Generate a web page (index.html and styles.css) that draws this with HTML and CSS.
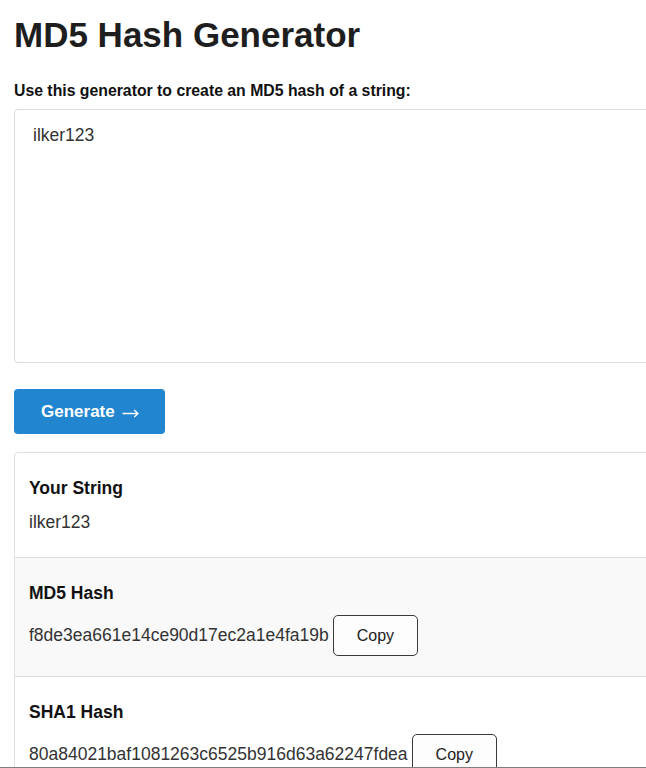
FILE: index.html
```html
<!DOCTYPE html>
<html lang="en">
<head>
<meta charset="utf-8">
<title>MD5 Hash Generator</title>
<link rel="stylesheet" href="styles.css">
</head>
<body>
<main class="page">
  <h1 class="title">MD5 Hash Generator</h1>
  <form class="form">
    <label class="label" for="input">Use this generator to create an MD5 hash of a string:</label>
    <textarea class="input" id="input">ilker123</textarea>
    <button type="button" class="generate">Generate <svg class="arrow" width="17" height="10" viewBox="0 0 17 10" aria-hidden="true"><path d="M0.5 5.5H16M12.2 2L16 5.5L12.2 9" fill="none" stroke="#ffffff" stroke-width="1.3"/></svg></button>
  </form>
  <section class="results">
    <div class="result">
      <h3 class="result-title">Your String</h3>
      <div class="result-row plain">ilker123</div>
    </div>
    <div class="result alt">
      <h3 class="result-title tight">MD5 Hash</h3>
      <div class="result-row"><span class="hash">f8de3ea661e14ce90d17ec2a1e4fa19b</span><button type="button" class="copy">Copy</button></div>
    </div>
    <div class="result">
      <h3 class="result-title tight">SHA1 Hash</h3>
      <div class="result-row"><span class="hash">80a84021baf1081263c6525b916d63a62247fdea</span><button type="button" class="copy">Copy</button></div>
    </div>
  </section>
</main>
<div class="window-edge"></div>
</body>
</html>
```

FILE: styles.css
```css
html {
  overflow: hidden;
}
body {
  margin: 0;
  padding: 0;
  background: #ffffff;
  font-family: "Liberation Sans", Arial, sans-serif;
  color: #222222;
}
.page {
  width: 720px;
  padding: 14.5px 0 0 14px;
}
.title {
  margin: 0;
  font-size: 35px;
  font-weight: 700;
  line-height: normal;
  color: #1e1e1e;
}
.form {
  display: flex;
  flex-direction: column;
  align-items: flex-start;
  margin-top: 27.5px;
}
.label {
  font-size: 15.8px;
  font-weight: 700;
  color: #111111;
  line-height: normal;
}
.input {
  box-sizing: border-box;
  width: 100%;
  height: 254px;
  margin-top: 9px;
  padding: 15px 18px;
  border: 1px solid #dcdcdc;
  border-radius: 4px;
  font-family: "Liberation Sans", Arial, sans-serif;
  font-size: 17.5px;
  line-height: normal;
  color: #333333;
  resize: none;
  outline: none;
}
.generate {
  display: flex;
  align-items: center;
  gap: 7px;
  margin-top: 26px;
  height: 45px;
  padding: 0 26px 0 27px;
  border: none;
  border-radius: 4px;
  background: #2185d0;
  color: #ffffff;
  font-family: "Liberation Sans", Arial, sans-serif;
  font-size: 17px;
  font-weight: 700;
}
.arrow {
  display: block;
  margin-top: 2px;
}
.results {
  margin-top: 18px;
  border: 1px solid #e0e0e0;
  border-radius: 4px;
}
.result {
  padding: 25px 14px 20px;
}
.result + .result {
  border-top: 1px solid #e0e0e0;
}
.result.alt {
  background: #f9f9f9;
}
.result-title {
  margin: 0 0 13px;
  font-size: 17.5px;
  font-weight: 700;
  line-height: normal;
  color: #111111;
}
.result-title.tight {
  margin-bottom: 11px;
}
.result-row {
  display: flex;
  align-items: center;
  gap: 4px;
  font-size: 17.5px;
  line-height: normal;
  color: #333333;
}
.result-row.plain {
  margin-top: 1px;
  padding-bottom: 4px;
}
.copy {
  box-sizing: border-box;
  height: 41px;
  padding: 0 23px;
  border: 1px solid #3a3a3a;
  border-radius: 5px;
  background: #fdfdfd;
  color: #222222;
  font-family: "Liberation Sans", Arial, sans-serif;
  font-size: 16px;
}
.window-edge {
  position: fixed;
  left: 0;
  right: 0;
  bottom: 0;
  height: 1px;
  background: #7f7f7f;
}
```
